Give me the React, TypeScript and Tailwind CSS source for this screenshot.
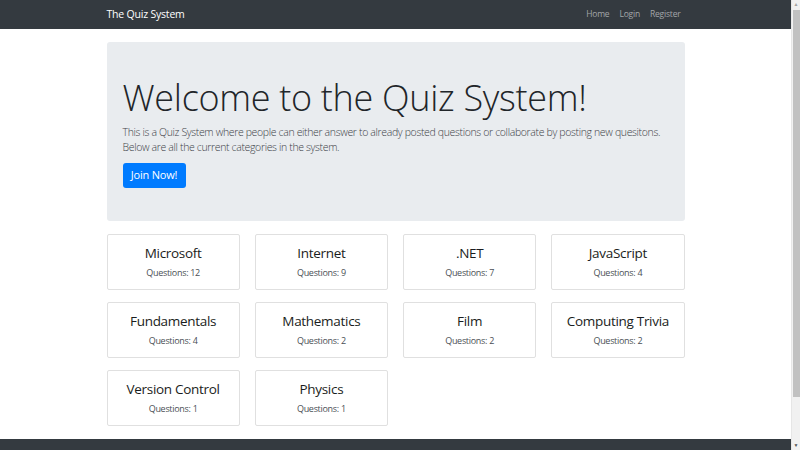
import React from 'react';

const categories = [
  { name: 'Microsoft', count: 12 },
  { name: 'Internet', count: 9 },
  { name: '.NET', count: 7 },
  { name: 'JavaScript', count: 4 },
  { name: 'Fundamentals', count: 4 },
  { name: 'Mathematics', count: 2 },
  { name: 'Film', count: 2 },
  { name: 'Computing Trivia', count: 2 },
  { name: 'Version Control', count: 1 },
  { name: 'Physics', count: 1 },
];

const CategoryCard = ({ name, count }: { name: string; count: number }) => (
  <div className="h-[56px] bg-white border border-[#e0e0e0] rounded-[2px] pt-[10px] text-center">
    <h4 className="text-[13.5px] leading-[17px] tracking-[-0.3px] text-[#1a1d20]">{name}</h4>
    <p className="mt-[5px] text-[9px] leading-[12px] tracking-[-0.3px] text-[#4a4f55]">Questions: {count}</p>
  </div>
);

export default function App() {
  return (
    <div className="h-[450px] w-[800px] overflow-hidden flex bg-white font-['Open_Sans',sans-serif] text-[#212529]">
      {/* Page */}
      <div className="flex-1 flex flex-col">
        {/* Navbar */}
        <nav className="h-[29px] shrink-0 bg-[#343a40]">
          <div className="w-[578px] mx-auto h-full flex items-center justify-between">
            <span className="text-[10.5px] tracking-[-0.2px] text-white">The Quiz System</span>
            <div className="flex items-center gap-[10px] pr-[4px] text-[8.5px] tracking-[-0.2px] text-[#a3a6a9]">
              <span>Home</span>
              <span>Login</span>
              <span>Register</span>
            </div>
          </div>
        </nav>

        <main className="w-[578px] mx-auto pt-[13px] shrink-0">
          {/* Jumbotron */}
          <div className="h-[179px] bg-[#e9ecef] rounded-[3px] pt-[35px] px-[16px]">
            <h1 className="text-[36px] leading-[42px] font-light tracking-[-0.3px]">Welcome to the Quiz System!</h1>
            <p className="mt-[6px] text-[10.5px] leading-[15px] font-light tracking-[-0.35px] text-[#3d4247]">
              This is a Quiz System where people can either answer to already posted questions or collaborate by posting new quesitons.
              <br />
              Below are all the current categories in the system.
            </p>
            <button className="mt-[8px] h-[25px] w-[63px] rounded-[3px] bg-[#007bff] text-white text-[11px] tracking-[-0.2px]">
              Join Now!
            </button>
          </div>

          {/* Categories */}
          <div className="mt-[13px] grid grid-cols-4 gap-x-[15px] gap-y-[12px]">
            {categories.map((c) => (
              <CategoryCard key={c.name} name={c.name} count={c.count} />
            ))}
          </div>
        </main>

        {/* Footer */}
        <footer className="mt-[13px] h-[60px] shrink-0 bg-[#343a40]" />
      </div>

      {/* Scrollbar */}
      <div className="w-[9px] shrink-0 bg-[#f1f1f1] border-l border-[#e6e6e6] flex flex-col items-center">
        <div className="h-[9px] flex items-center justify-center text-[5px] leading-none text-[#a3a3a3]">▲</div>
        <div className="mt-[1px] h-[387px] w-[7px] bg-[#c1c1c1]" />
        <div className="flex-1" />
        <div className="h-[9px] flex items-center justify-center text-[5px] leading-none text-[#505050]">▼</div>
      </div>
    </div>
  );
}
